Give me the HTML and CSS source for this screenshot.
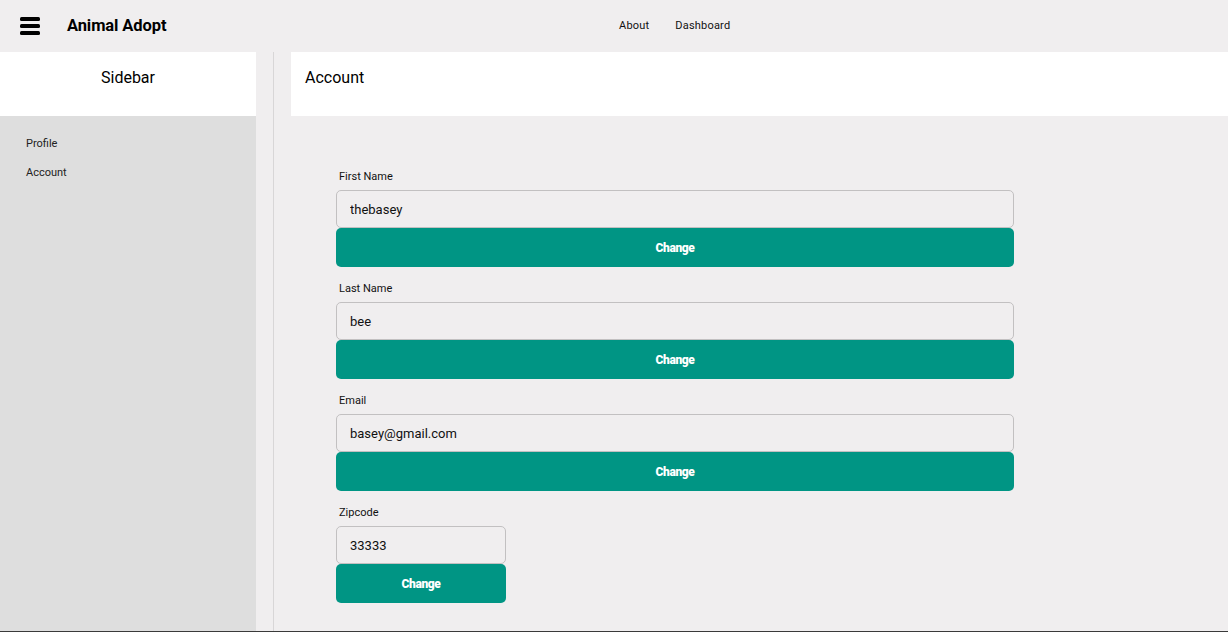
FILE: index.html
```html
<!DOCTYPE html>
<html>
<head>
<meta charset="utf-8">
<link rel="stylesheet" href="styles.css">
</head>
<body>
<header class="topbar">
  <div class="brand">
    <svg class="menu-icon" width="20" height="18" viewBox="0 0 20 18">
      <rect x="0" y="0" width="20" height="4" rx="1.5" fill="#000"/>
      <rect x="0" y="7" width="20" height="4" rx="1.5" fill="#000"/>
      <rect x="0" y="14" width="20" height="4" rx="1.5" fill="#000"/>
    </svg>
    <span class="brand-name">Animal Adopt</span>
  </div>
  <nav class="nav">
    <a class="nav-link">About</a>
    <a class="nav-link">Dashboard</a>
  </nav>
</header>
<div class="layout">
  <aside class="sidebar">
    <div class="sidebar-head">Sidebar</div>
    <ul class="sidebar-list">
      <li>Profile</li>
      <li>Account</li>
    </ul>
  </aside>
  <div class="divider"></div>
  <main class="main">
    <div class="main-head">Account</div>
    <form class="form">
      <div class="field">
        <label class="label">First Name</label>
        <input class="input" value="thebasey">
        <button type="button" class="btn">Change</button>
      </div>
      <div class="field">
        <label class="label">Last Name</label>
        <input class="input" value="bee">
        <button type="button" class="btn">Change</button>
      </div>
      <div class="field">
        <label class="label">Email</label>
        <input class="input" value="basey@gmail.com">
        <button type="button" class="btn">Change</button>
      </div>
      <div class="field small">
        <label class="label">Zipcode</label>
        <input class="input" value="33333">
        <button type="button" class="btn">Change</button>
      </div>
    </form>
  </main>
</div>
</body>
</html>
```
FILE: styles.css
```css
* { box-sizing: border-box; }
html, body { margin: 0; padding: 0; }
body {
  font-family: Roboto, "Liberation Sans", sans-serif;
  background: #f0eeef;
  color: #000;
  height: 632px;
  overflow: hidden;
  border-bottom: 1px solid #3a3a3a;
}
.topbar {
  height: 52px;
  display: flex;
  align-items: center;
  background: #f0eeef;
  padding-bottom: 2px;
}
.brand {
  width: 619px;
  padding-left: 20px;
  display: flex;
  align-items: center;
}
.menu-icon { display: block; margin-top: 1px; }
.brand-name {
  margin-left: 27px;
  font-size: 16.5px;
  font-weight: 700;
  letter-spacing: -0.1px;
}
.nav { display: flex; gap: 26px; }
.nav-link { font-size: 11px; color: #111; letter-spacing: 0.2px; }
.layout {
  display: flex;
  height: 579px;
}
.sidebar {
  width: 256px;
  background: #dedede;
  flex: none;
}
.sidebar-head {
  height: 64px;
  background: #fff;
  text-align: center;
  font-size: 16px;
  line-height: 19px;
  padding-top: 16px;
}
.sidebar-list {
  list-style: none;
  margin: 0;
  padding: 21px 0 0 26px;
}
.sidebar-list li {
  font-size: 11px;
  height: 29px;
  line-height: 14px;
  color: #222;
}
.divider {
  width: 1px;
  margin-left: 17px;
  background: #d8d6d7;
  flex: none;
}
.main {
  flex: 1;
  margin-left: 17px;
}
.main-head {
  height: 64px;
  background: #fff;
  padding-left: 14px;
  font-size: 16px;
  line-height: 19px;
  padding-top: 16px;
}
.form {
  padding: 54px 0 0 45px;
  display: flex;
  flex-direction: column;
  gap: 15px;
}
.field {
  display: flex;
  flex-direction: column;
  width: 678px;
}
.field.small { width: 170px; }
.label {
  font-size: 11px;
  padding-left: 3px;
  height: 14px;
  line-height: 14px;
  margin-bottom: 6px;
  color: #111;
}
.input {
  height: 38px;
  border: 1px solid #c2c0c1;
  border-radius: 5px;
  background: #f0eeef;
  font-family: Roboto, "Liberation Sans", sans-serif;
  font-size: 13px;
  padding: 0 13px;
  color: #111;
  outline: none;
}
.btn {
  height: 39px;
  border: none;
  border-radius: 5px;
  background: #009584;
  color: #fff;
  font-family: Roboto, "Liberation Sans", sans-serif;
  font-weight: 900;
  font-size: 12px;
  letter-spacing: -0.4px;
  cursor: pointer;
}
```
